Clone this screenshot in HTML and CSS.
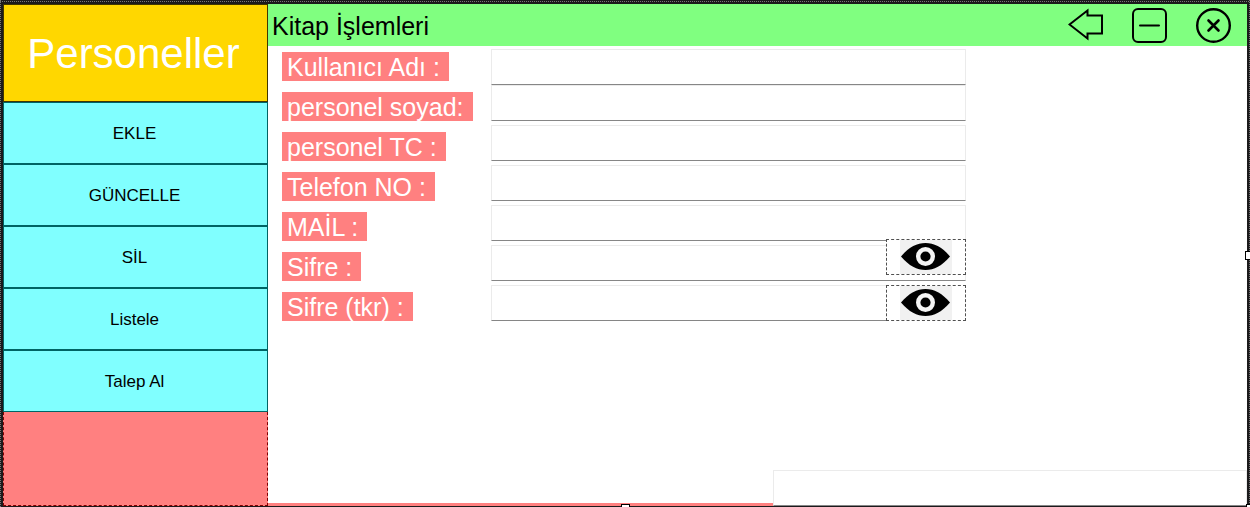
FILE: index.html
```html
<!DOCTYPE html>
<html lang="tr">
<head>
<meta charset="utf-8">
<title>Kitap İşlemleri</title>
<link rel="stylesheet" href="styles.css">
</head>
<body>
<div class="window">
  <nav class="sidebar">
    <button class="side-title" type="button">Personeller</button>
    <button class="side-button" type="button">EKLE</button>
    <button class="side-button" type="button">GÜNCELLE</button>
    <button class="side-button" type="button">SİL</button>
    <button class="side-button" type="button">Listele</button>
    <button class="side-button" type="button">Talep Al</button>
    <div class="side-panel"></div>
  </nav>
  <main class="content">
    <header class="topbar">
      <h1 class="heading">Kitap İşlemleri</h1>
      <div class="actions">
        <button class="icon-button" type="button" aria-label="Geri">
          <svg width="36" height="36" viewBox="0 0 36 36" fill="none" stroke="#000" stroke-width="2"><path d="M1.500 16.500L19.500 2.500V7.500H34V25.500H19.500V30.500Z"/></svg>
        </button>
        <button class="icon-button" type="button" aria-label="Küçült">
          <svg width="36" height="36" viewBox="0 0 36 36" fill="none" stroke="#000" stroke-width="2" stroke-linecap="round"><rect x="1" y="1" width="33" height="33" rx="5"/><path d="M8 17.500H27"/></svg>
        </button>
        <button class="icon-button" type="button" aria-label="Kapat">
          <svg width="36" height="36" viewBox="0 0 36 36" fill="none" stroke="#000" stroke-width="2.400" stroke-linecap="round"><circle cx="17.500" cy="17.500" r="16.300"/><path d="M12.500 12.500L22.500 22.500M22.500 12.500L12.500 22.500" stroke-width="2.600"/></svg>
        </button>
      </div>
    </header>
    <form class="form">
      <div class="row row-first"><div class="label-cell"><label class="label" for="ad">Kullanıcı Adı :</label></div><div class="field"><input class="input" id="ad" type="text"></div></div>
      <div class="row"><div class="label-cell"><label class="label" for="soyad">personel soyad:</label></div><div class="field"><input class="input" id="soyad" type="text"></div></div>
      <div class="row"><div class="label-cell"><label class="label" for="tc">personel TC :</label></div><div class="field"><input class="input" id="tc" type="text"></div></div>
      <div class="row"><div class="label-cell"><label class="label" for="tel">Telefon NO :</label></div><div class="field"><input class="input" id="tel" type="text"></div></div>
      <div class="row"><div class="label-cell"><label class="label" for="mail">MAİL :</label></div><div class="field"><input class="input" id="mail" type="text"></div></div>
      <div class="row"><div class="label-cell"><label class="label" for="sifre">Sifre :</label></div><div class="field"><input class="input" id="sifre" type="password">
        <button class="eye eye-raised" type="button" aria-label="Şifreyi göster"><svg class="eye-icon" width="52" height="34" viewBox="0 0 52 34"><path d="M1 16.500C9 7 17 3 25.500 3S42 7 50 16.500C42 26 34 30 25.500 30S9 26 1 16.500Z"/><circle cx="25.500" cy="16.500" r="7.300" fill="#000" stroke="#f4f4f4" stroke-width="4.400"/></svg></button></div></div>
      <div class="row"><div class="label-cell"><label class="label" for="tekrar">Sifre (tkr) :</label></div><div class="field"><input class="input" id="tekrar" type="password">
        <button class="eye" type="button" aria-label="Şifre tekrarını göster"><svg class="eye-icon" width="52" height="34" viewBox="0 0 52 34"><path d="M1 16.500C9 7 17 3 25.500 3S42 7 50 16.500C42 26 34 30 25.500 30S9 26 1 16.500Z"/><circle cx="25.500" cy="16.500" r="7.300" fill="#000" stroke="#f4f4f4" stroke-width="4.400"/></svg></button></div></div>
    </form>
    <footer class="bottom">
      <div class="strip"></div>
      <input class="input bottom-input" type="text" aria-label="Bilgi">
    </footer>
  </main>
  <span class="handle handle-right"></span>
  <span class="handle handle-bottom"></span>
  <span class="handle handle-corner"></span>
</div>
</body>
</html>
```
FILE: styles.css
```css
* {
  box-sizing: border-box;
}

body {
  margin: 0;
  font-family: "Liberation Sans", Arial, sans-serif;
  color: #000;
}

button {
  font-family: inherit;
  color: inherit;
  padding: 0;
  border-radius: 0;
}

.window {
  position: relative;
  display: flex;
  min-height: 100vh;
  padding: 4px 3px 1px;
  overflow: hidden;
  background:
    repeating-linear-gradient(90deg, #777 0 1px, transparent 1px 2px) 0 1px / 100% 1px no-repeat,
    repeating-linear-gradient(#777 0 1px, transparent 1px 2px) 0 0 / 1px 100% no-repeat,
    repeating-linear-gradient(#777 0 1px, transparent 1px 2px) 100% 0 / 1px 100% no-repeat,
    #1b1a1c;
}

.sidebar {
  display: flex;
  flex-direction: column;
  flex: 0 0 265px;
}

.side-title {
  height: 98px;
  padding: 2px 4px 0 0;
  border: 1px solid #403600;
  background: #ffd700;
  color: #fff;
  font-size: 42px;
}

.side-button {
  height: 62px;
  padding: 2px 2px 0 0;
  border: 1px solid #006464;
  background: #80ffff;
  font-size: 17px;
}

.side-panel {
  flex: 1;
  border: 1px dashed #800000;
  border-top: 0;
  background: #ff8080;
}

.content {
  display: flex;
  flex-direction: column;
  flex: 1;
  min-width: 0;
  background: #fff;
}

.topbar {
  display: flex;
  justify-content: space-between;
  height: 42px;
  padding: 4px 15px 0 4px;
  background: #80ff80;
}

.heading {
  margin: 0;
  font-size: 25px;
  font-weight: 400;
  line-height: 36px;
}

.actions {
  display: flex;
  gap: 28px;
}

.icon-button {
  width: 36px;
  height: 36px;
  border: 0;
  background: none;
}

.icon-button svg {
  display: block;
}

.form {
  flex: 1;
  padding: 3px 14px 0;
}

.row {
  display: flex;
  height: 40px;
}

.row-first {
  height: 36px;
}

.label-cell {
  flex: 0 0 209px;
  padding-top: 7px;
}

.row-first .label-cell {
  padding-top: 3px;
}

.label {
  display: inline-block;
  padding: 1px 9px 0 5px;
  background: #ff8080;
  color: #fff;
  font-size: 25px;
  line-height: 28px;
}

.field {
  position: relative;
  flex: 0 1 475px;
  height: 36px;
}

.input {
  display: block;
  width: 100%;
  height: 36px;
  padding: 0 6px;
  border: 1px solid #ebebeb;
  border-bottom-color: #868686;
  border-radius: 0;
  background: #fff;
  font: 25px "Liberation Sans", Arial, sans-serif;
}

.eye {
  position: absolute;
  top: 0;
  right: 0;
  width: 80px;
  height: 36px;
  border: 1px dashed #505050;
  background: #fff;
}

.eye-raised {
  top: -6px;
}

.eye-icon {
  display: block;
  margin: 0 auto;
  background: #f1f1f1;
}

.bottom {
  display: flex;
  align-items: flex-end;
}

.strip {
  flex: 1;
  height: 3px;
  background: #ff8080;
}

.bottom-input {
  flex: 0 1 474px;
  min-width: 0;
}

.handle {
  position: absolute;
  width: 9px;
  height: 9px;
  border: 1px solid #000;
  background: #fff;
}

.handle-right {
  top: 50%;
  right: -4px;
  margin-top: -3px;
}

.handle-bottom {
  bottom: -6px;
  left: 50%;
  margin-left: -4px;
}

.handle-corner {
  right: -5px;
  bottom: -6px;
}
```
